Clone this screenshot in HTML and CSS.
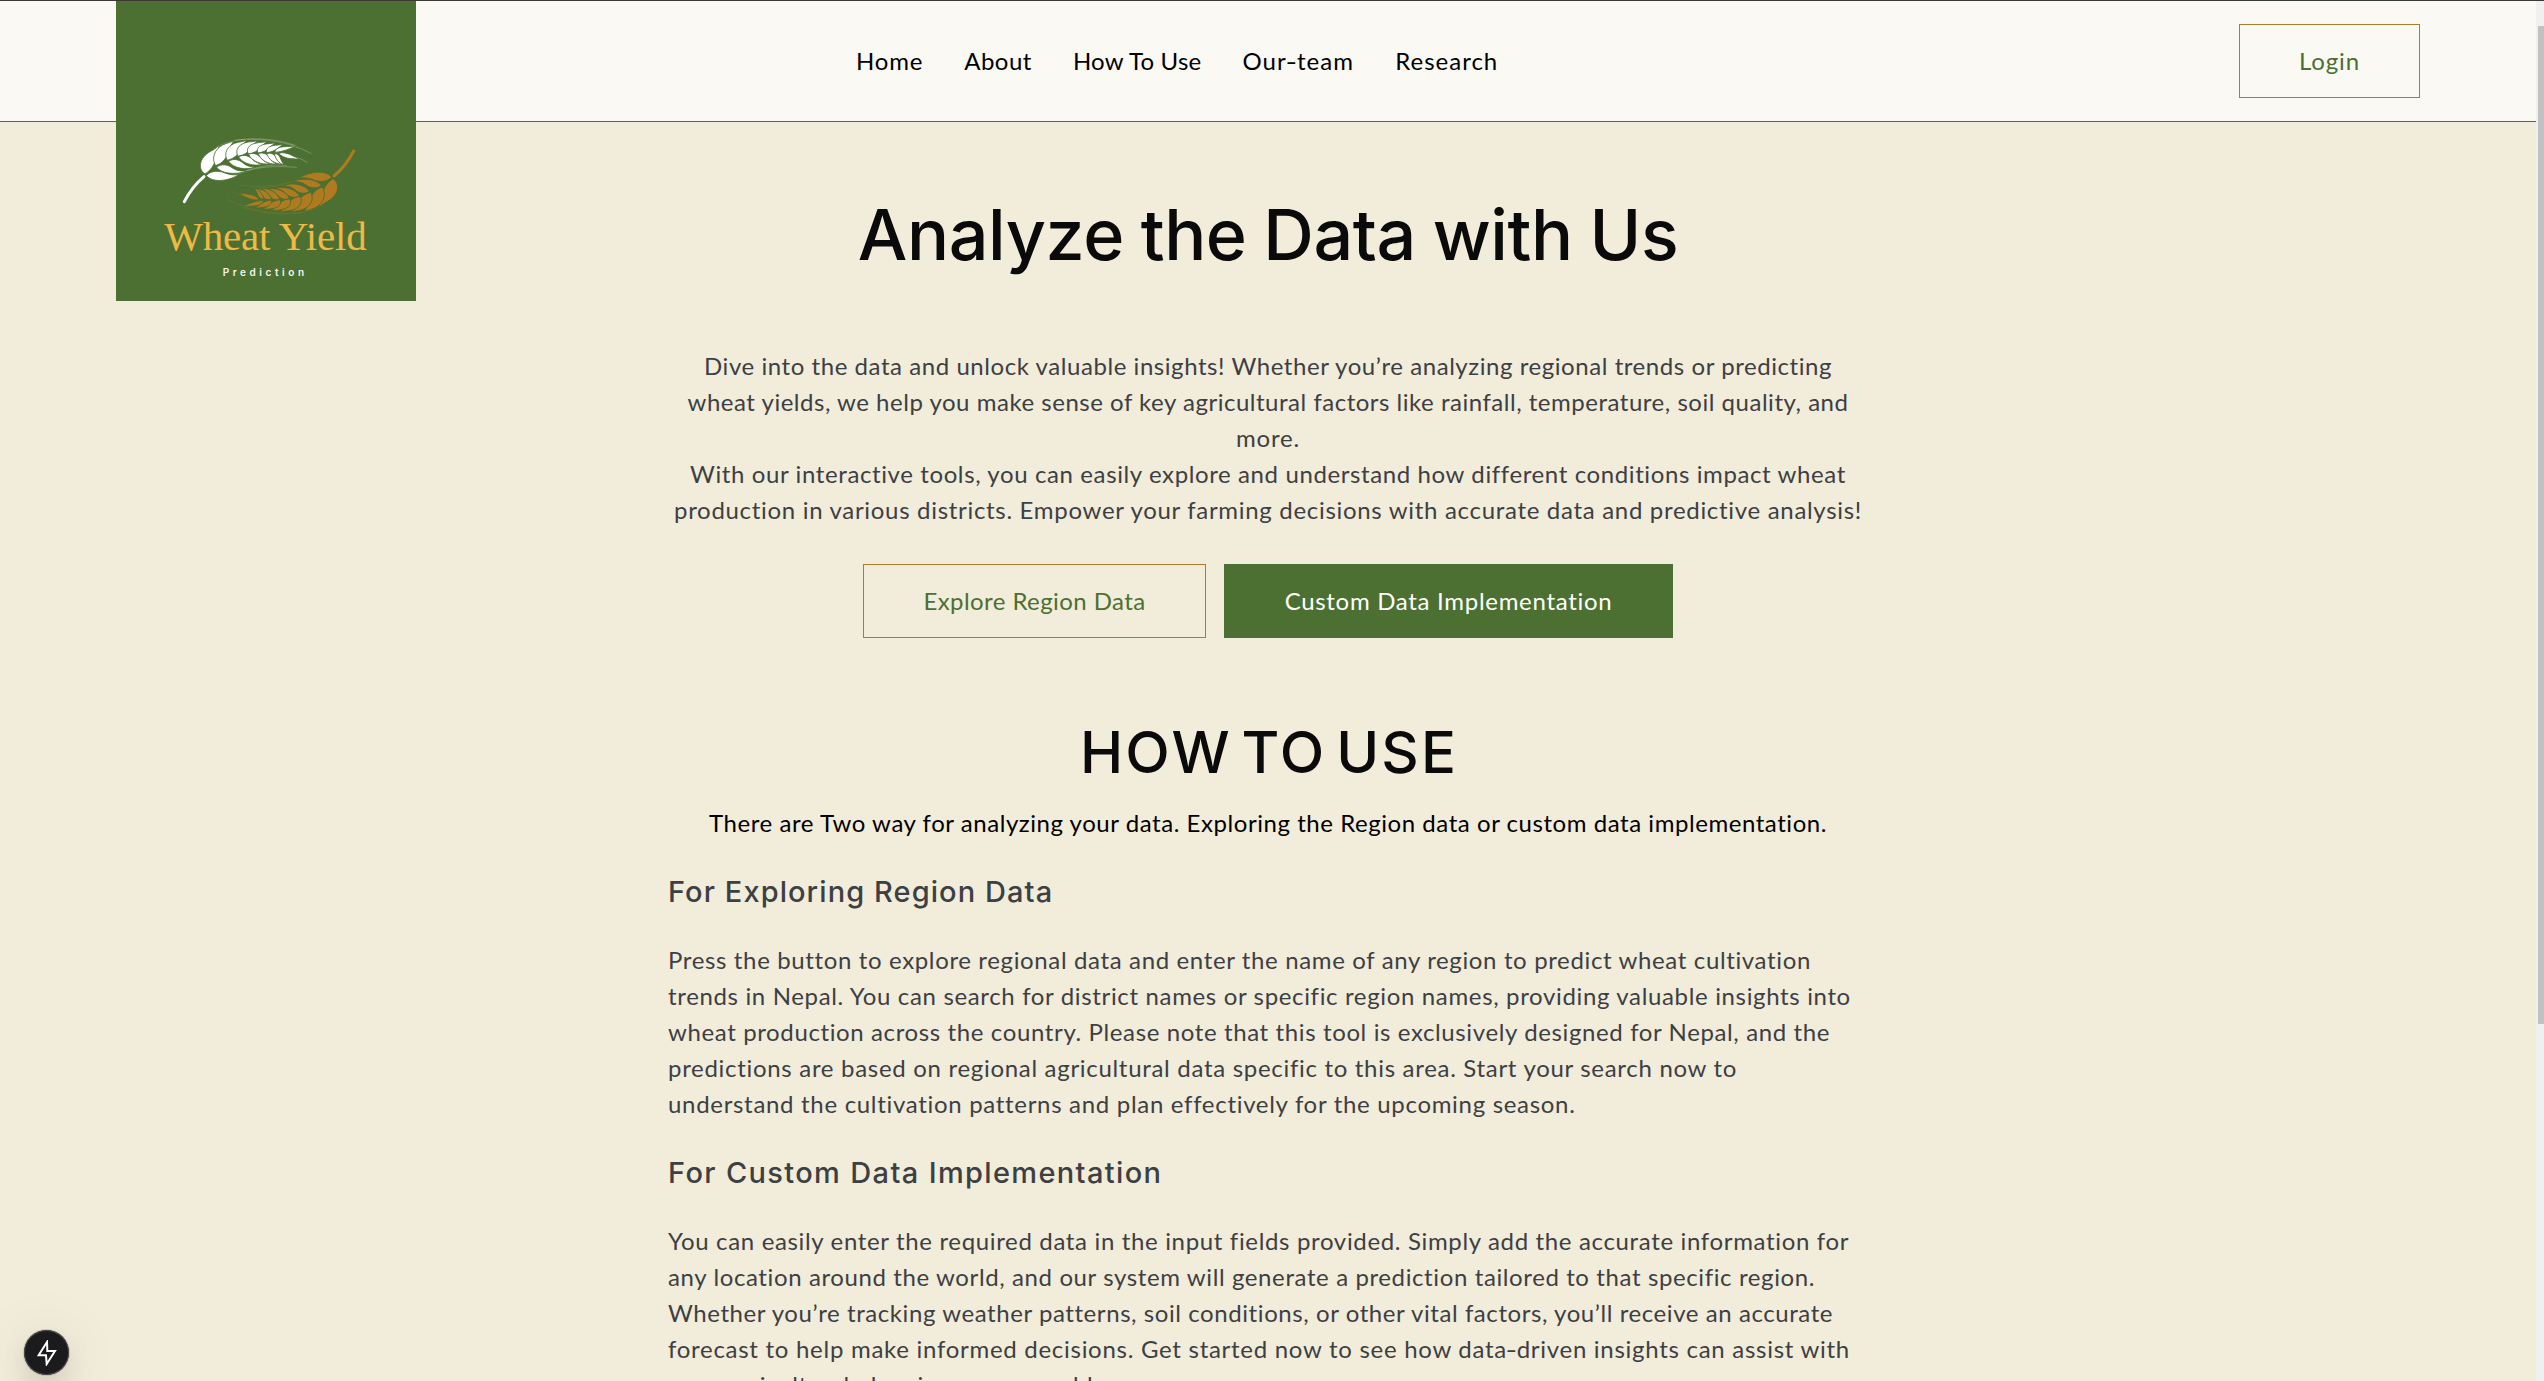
FILE: index.html
```html
<!DOCTYPE html>
<html lang="en">
<head>
<meta charset="utf-8">
<title>Wheat Yield Prediction</title>
<link rel="stylesheet" href="styles.css">
</head>
<body>
<div class="viewport">
  <div class="page">
    <header class="header">
      <a class="logo" href="#">
        <svg viewBox="48 3 900 900" role="img" aria-label="Wheat Yield Prediction">
          <defs>
            <g id="ear">
              <path class="awn" d="M340 448C400 405 520 410 590 438M400 421C470 412 540 424 592 440M575 437Q610 446 634 461M585 470Q605 476 623 488M405 527C450 505 500 495 590 502M430 515C470 500 520 490 560 497"/>
              <path class="stem" d="M253 605C268 576 288 550 312 530"/>
              <g class="kernels">
                <path d="M315 522C296 510 294 480 325 458C340 448 350 446 358 434C350 456 352 500 315 522Z"/>
                <path d="M347 497C333 475 344 447 368 435C383 428 392 428 403 421C382 445 389 483 347 497Z"/>
                <path d="M382 481C370 460 382 439 404 430C420 424 430 426 441 419C421 438 424 470 382 481Z"/>
                <path d="M414 469C404 450 416 434 436 428C450 424 462 426 474 421C453 436 452 462 414 469Z"/>
                <path d="M445 462C437 446 448 434 465 430C480 426 490 428 502 424C483 436 480 456 445 462Z"/>
                <path d="M474 459C468 445 478 437 492 433C506 430 515 431 527 428C510 438 506 454 474 459Z"/>
                <path d="M500 458C496 447 505 440 518 437C530 434 540 436 552 432C535 442 528 454 500 458Z"/>
                <path d="M524 457C526 446 538 441 552 440C566 439 578 440 592 437C570 445 550 456 524 457Z"/>
                <path d="M536 460C550 455 568 460 598 478C575 477 550 476 536 460Z"/>
                <path d="M319 527C334 510 358 512 375 519C390 525 402 525 416 524C392 540 342 552 319 527Z"/>
                <path d="M350 502C364 490 384 494 396 503C408 512 422 514 440 513C415 524 366 524 350 502Z"/>
                <path d="M386 484C400 474 418 479 428 488C438 497 450 501 466 501C440 511 400 506 386 484Z"/>
                <path d="M416 471C430 462 446 467 455 476C464 485 474 491 490 493C462 500 428 491 416 471Z"/>
                <path d="M446 463C458 457 472 462 480 471C488 480 496 487 510 491C484 496 454 483 446 463Z"/>
                <path d="M475 461C487 456 499 461 506 470C512 479 518 487 530 492C506 494 482 481 475 461Z"/>
                <path d="M500 461C511 457 521 461 527 470C532 479 536 487 546 492C524 492 506 479 500 461Z"/>
                <path d="M523 461C532 460 538 466 541 474C544 482 547 488 552 495C536 490 526 476 523 461Z"/>
              </g>
            </g>
          </defs>
          <use href="#ear" class="ear-white"/>
          <use href="#ear" class="ear-gold" transform="rotate(180 507 529)"/>
          <text class="logo-name" x="193" y="750" textLength="607">Wheat Yield</text>
          <text class="logo-sub" x="368" y="828" textLength="244">Prediction</text>
        </svg>
      </a>
      <nav class="nav">
        <a href="#">Home</a>
        <a href="#">About</a>
        <a href="#">How To Use</a>
        <a href="#">Our<span class="dash">-</span>team</a>
        <a href="#">Research</a>
      </nav>
      <a class="btn btn-outline login" href="#">Login</a>
    </header>

    <main class="content">
      <h1 class="title">Analyze the Data with Us</h1>
      <p class="intro">
        <span class="line">Dive into the data and unlock valuable insights! Whether you’re analyzing regional trends or predicting</span>
        <span class="line">wheat yields, we help you make sense of key agricultural factors like rainfall, temperature, soil quality, and</span>
        <span class="line">more.</span>
        <span class="line">With our interactive tools, you can easily explore and understand how different conditions impact wheat</span>
        <span class="line">production in various districts. Empower your farming decisions with accurate data and predictive analysis!</span>
      </p>
      <div class="actions">
        <a class="btn btn-outline explore" href="#">Explore Region Data</a>
        <a class="btn btn-solid custom" href="#">Custom Data Implementation</a>
      </div>

      <h2 class="subtitle">HOW TO USE</h2>
      <p class="lead">There are Two way for analyzing your data. Exploring the Region data or custom data implementation.</p>

      <h3 class="heading heading-region">For Exploring Region Data</h3>
      <p class="guide guide-region">
        <span class="line">Press the button to explore regional data and enter the name of any region to predict wheat cultivation</span>
        <span class="line">trends in Nepal. You can search for district names or specific region names, providing valuable insights into</span>
        <span class="line">wheat production across the country. Please note that this tool is exclusively designed for Nepal, and the</span>
        <span class="line">predictions are based on regional agricultural data specific to this area. Start your search now to</span>
        <span class="line">understand the cultivation patterns and plan effectively for the upcoming season.</span>
      </p>

      <h3 class="heading heading-custom">For Custom Data Implementation</h3>
      <p class="guide guide-custom">
        <span class="line">You can easily enter the required data in the input fields provided. Simply add the accurate information for</span>
        <span class="line">any location around the world, and our system will generate a prediction tailored to that specific region.</span>
        <span class="line">Whether you’re tracking weather patterns, soil conditions, or other vital factors, you’ll receive an accurate</span>
        <span class="line">forecast to help make informed decisions. Get started now to see how data<span class="dash">-</span>driven insights can assist with</span>
        <span class="line">your agricultural planning more capably.</span>
      </p>
    </main>
  </div>
  <div class="scrollbar"><div class="thumb"></div></div>
  <div class="badge">
    <svg viewBox="0 0 60 78" aria-hidden="true"><path d="M30 6L5 46H27L29 72L54 33H31Z"/></svg>
  </div>
</div>
</body>
</html>
```
FILE: styles.css
```css
* { box-sizing: border-box; margin: 0; padding: 0; }

body {
  background: #f2ecda;
  color: #000;
  font: 24px/36px Lato, "Open Sans", sans-serif;
}

a { color: inherit; text-decoration: none; }

.viewport {
  position: relative;
  display: flex;
  height: 1381px;
  overflow: hidden;
  border-top: 1px solid #3b3836;
}

.page { flex: 1; min-width: 0; }

/* Header */
.header {
  position: relative;
  display: flex;
  align-items: center;
  justify-content: space-between;
  height: 121px;
  padding: 0 116px 0 856px;
  background: #faf9f4;
  border-bottom: 1px solid #4c7031;
}

.logo {
  position: absolute;
  top: 0;
  left: 116px;
  width: 300px;
  height: 300px;
  background: #4c7031;
}

.logo svg { display: block; width: 300px; height: 300px; }
.stem { fill: none; stroke: currentColor; stroke-width: 9; stroke-linecap: round; }
.awn { fill: none; stroke: currentColor; stroke-width: 1.6; opacity: .45; }
.kernels { stroke: #4c7031; stroke-width: 2.5; }
.ear-white { color: #fff; fill: #fff; }
.ear-gold { color: #b07a20; fill: #b07a20; }
.logo-name { font: 123px "Liberation Serif", serif; fill: #efb946; }
.logo-sub { font: 600 30px Inter, sans-serif; fill: #f4f6f0; }

.nav { display: flex; gap: 41px; }
.nav a { white-space: nowrap; }
.nav a:nth-child(1) { letter-spacing: .8px; }
.nav a:nth-child(2) { letter-spacing: .5px; }
.nav a:nth-child(3) { letter-spacing: .22px; }
.nav a:nth-child(4) { letter-spacing: 1.1px; }
.nav a:nth-child(5) { letter-spacing: 1px; }
.dash { display: inline-block; transform: scaleX(1.3); }

.btn {
  display: flex;
  align-items: center;
  justify-content: center;
  height: 74px;
  padding-bottom: 1px;
  white-space: nowrap;
}
.btn-outline { border: 1px solid #b07a28; color: #4c7031; }
.btn-solid { background: #4c7031; color: #fff; }
.login { width: 181px; letter-spacing: .9px; }
.explore { width: 343px; letter-spacing: .42px; }
.custom { width: 449px; letter-spacing: .7px; }

/* Main column */
.content { width: 1200px; margin: 0 auto; padding-top: 68px; }

.title {
  font: 500 70px/90px Inter, sans-serif;
  letter-spacing: -.4px;
  word-spacing: -1.5px;
  text-align: center;
  color: #0a0a0a;
}

.line { display: block; white-space: nowrap; }

.intro { margin-top: 68px; text-align: center; color: #3d4043; }
.intro .line:nth-child(1) { letter-spacing: .56px; }
.intro .line:nth-child(2) { letter-spacing: .52px; }
.intro .line:nth-child(3) { letter-spacing: .8px; }
.intro .line:nth-child(4) { letter-spacing: .61px; }
.intro .line:nth-child(5) { letter-spacing: .69px; }

.actions {
  display: flex;
  justify-content: center;
  gap: 18px;
  margin-top: 36px;
}

.subtitle {
  margin-top: 79px;
  font: 500 58px/70px Inter, sans-serif;
  letter-spacing: 2.2px;
  word-spacing: -8px;
  text-indent: 2px;
  text-align: center;
  color: #0a0a0a;
}

.lead { margin-top: 18px; text-align: center; letter-spacing: .55px; }

.heading {
  margin: 32px 0;
  font: 500 29px/37px Inter, sans-serif;
  color: #3d4043;
}
.heading-region { letter-spacing: 1.08px; }
.heading-custom { letter-spacing: 1.35px; }

.guide { color: #3d4043; }
.guide-region .line:nth-child(1) { letter-spacing: .638px; }
.guide-region .line:nth-child(2) { letter-spacing: .65px; }
.guide-region .line:nth-child(3) { letter-spacing: .62px; }
.guide-region .line:nth-child(4) { letter-spacing: .695px; }
.guide-region .line:nth-child(5) { letter-spacing: .691px; }
.guide-custom .line:nth-child(1) { letter-spacing: .655px; }
.guide-custom .line:nth-child(2) { letter-spacing: .61px; }
.guide-custom .line:nth-child(3) { letter-spacing: .575px; }
.guide-custom .line:nth-child(4) { letter-spacing: .72px; }
.guide-custom .line:nth-child(5) { letter-spacing: .64px; }

/* Window scrollbar */
.scrollbar { width: 8px; padding: 25px 0 0 2px; background: #f0f0f0; }
.thumb { height: 998px; background: #c1c1c1; }

/* Floating dev indicator */
.badge {
  position: absolute;
  left: 24px;
  bottom: 6px;
  display: flex;
  align-items: center;
  justify-content: center;
  width: 45px;
  height: 45px;
  border-radius: 50%;
  background: #1b1b1d;
  box-shadow: inset 0 0 0 1px #4a4a4a, 0 0 0 1px rgba(0, 0, 0, .12), 0 16px 32px -8px rgba(0, 0, 0, .24), 0 4px 60px rgba(0, 0, 0, .1);
}
.badge svg { width: 20px; height: 26px; }
.badge path { fill: none; stroke: #fff; stroke-width: 6; }
```
